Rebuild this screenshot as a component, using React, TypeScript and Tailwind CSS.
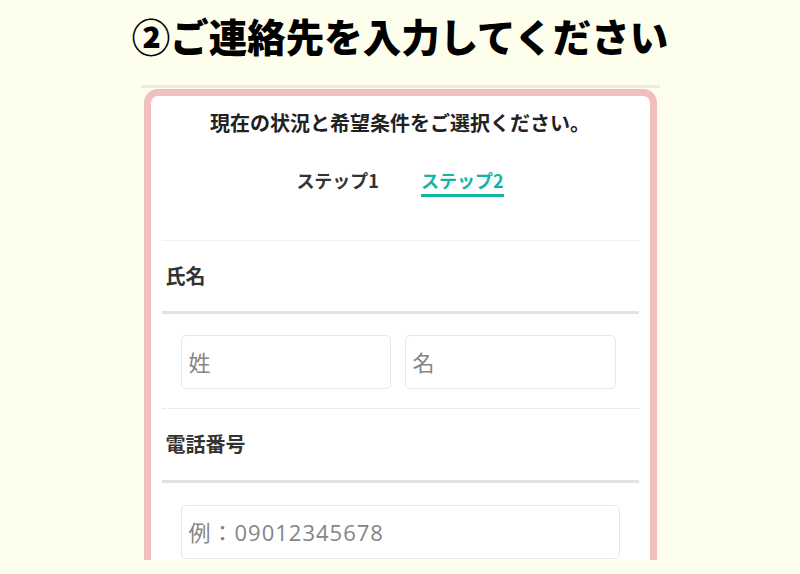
const jp = { fontFamily: '"Noto Sans CJK JP", "Noto Sans", sans-serif' };
const ph = { fontFamily: '"Open Sans", "Noto Sans CJK JP", sans-serif' };

function Field({ placeholder, className }: { placeholder: string; className: string }) {
  return (
    <div
      className={`flex h-[54px] items-center rounded-[5px] border border-[#e6e6e6] bg-white px-[7px] text-[22px] tracking-[1px] text-[#858585] ${className}`}
      style={ph}
    >
      {placeholder}
    </div>
  );
}

export default function App() {
  return (
    <div className="flex h-[574px] w-full flex-col items-center overflow-hidden bg-[#fefeec]" style={jp}>
      <h1 className="pt-[10px] text-[38.5px] leading-[50px] font-black text-black">
        ②ご連絡先を入力してください
      </h1>
      <div className="mt-[25px] h-[3px] w-[519px] bg-[#ebebeb]" />
      <div className="mt-[1px] h-[471px] w-[513px] overflow-hidden rounded-t-[14px] border-[7px] border-b-0 border-[#f2bfbf] bg-white">
        <p className="pt-[13px] text-center text-[20px] leading-[28px] font-bold text-[#222]">
          現在の状況と希望条件をご選択ください。
        </p>
        <div className="mt-[31px] flex justify-center gap-[42px] text-[18px] leading-[24px] font-bold">
          <span className="pb-[5px] text-[#333]">ステップ1</span>
          <span className="border-b-[3px] border-[#14b3a3] pb-[2px] text-[#14b3a3]">ステップ2</span>
        </div>
        <div className="mx-[11px] mt-[43px]">
          <div className="h-px bg-[#f0f0f0]" />
          <div className="py-[20px] pl-[4px] text-[20px] leading-[30px] font-bold text-[#333]">氏名</div>
          <div className="h-[3px] bg-[#e2e2e2]" />
          <div className="flex gap-[14px] pt-[21px] pb-[19px] pl-[19px]">
            <Field placeholder="姓" className="w-[210px]" />
            <Field placeholder="名" className="w-[211px]" />
          </div>
          <div className="border-t border-dotted border-[#d8d8d8]" />
          <div className="pt-[20px] pb-[21px] pl-[4px] text-[20px] leading-[30px] font-bold text-[#333]">電話番号</div>
          <div className="h-[3px] bg-[#e2e2e2]" />
          <div className="pt-[22px] pl-[19px]">
            <Field placeholder="例：09012345678" className="w-[439px]" />
          </div>
        </div>
      </div>
    </div>
  );
}
